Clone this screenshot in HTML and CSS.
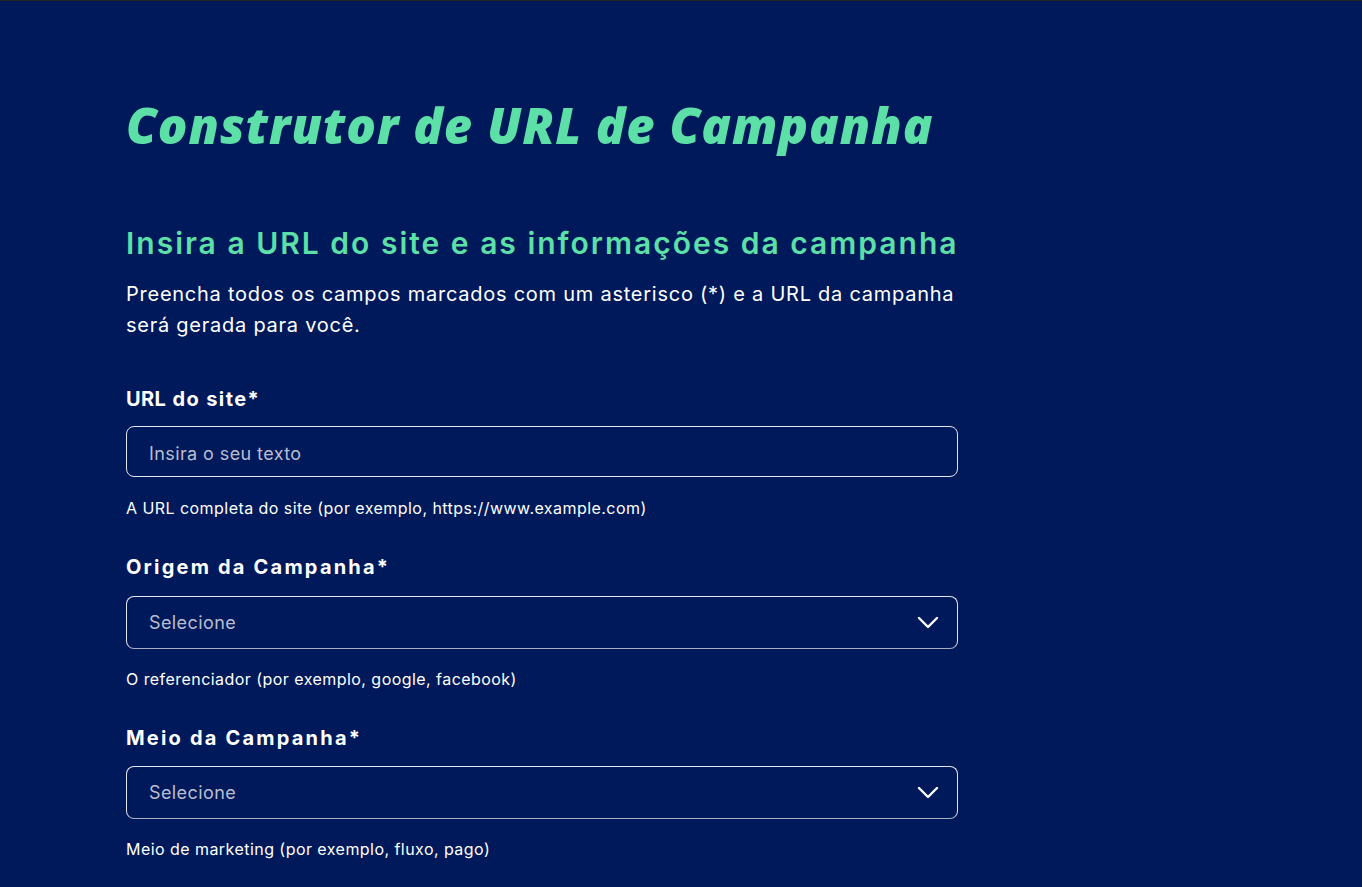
FILE: index.html
```html
<!DOCTYPE html>
<html lang="pt-BR">
<head>
<meta charset="utf-8">
<title>Construtor de URL de Campanha</title>
<link rel="stylesheet" href="styles.css">
</head>
<body>
<main class="page">
  <h1 class="title">Construtor de URL de Campanha</h1>
  <section class="form">
    <h2 class="subtitle">Insira a URL do site e as informações da campanha</h2>
    <p class="intro">Preencha todos os campos marcados com um asterisco (*) e a URL da campanha será gerada para você.</p>

    <div class="field">
      <label class="label label-short" for="url"><span class="caps">URL</span> do site*</label>
      <input class="input" id="url" type="text" placeholder="Insira o seu texto">
      <p class="help">A URL completa do site (por exemplo, https://www.example.com)</p>
    </div>

    <div class="field">
      <label class="label">Origem da Campanha*</label>
      <div class="select">
        <span class="select-text">Selecione</span>
        <svg class="chevron" width="22" height="14" viewBox="0 0 22 14"><path d="M2 2 L11 11 L20 2" fill="none" stroke="#fff" stroke-width="2.4" stroke-linecap="round" stroke-linejoin="round"/></svg>
      </div>
      <p class="help">O referenciador (por exemplo, google, facebook)</p>
    </div>

    <div class="field">
      <label class="label">Meio da Campanha*</label>
      <div class="select">
        <span class="select-text">Selecione</span>
        <svg class="chevron" width="22" height="14" viewBox="0 0 22 14"><path d="M2 2 L11 11 L20 2" fill="none" stroke="#fff" stroke-width="2.4" stroke-linecap="round" stroke-linejoin="round"/></svg>
      </div>
      <p class="help">Meio de marketing (por exemplo, fluxo, pago)</p>
    </div>
  </section>
</main>
</body>
</html>
```
FILE: styles.css
```css
html, body {
  margin: 0;
  padding: 0;
}
body {
  background: #00195a;
  border-top: 1px solid #222;
  font-family: "Inter", "Open Sans", sans-serif;
  color: #fff;
  min-height: 886px;
}
.page {
  width: 832px;
  padding: 94px 0 0 126px;
}
.title {
  margin: 0;
  font-family: "Open Sans", sans-serif;
  font-style: italic;
  font-weight: 800;
  font-size: 49px;
  line-height: 60px;
  letter-spacing: 1px;
  color: #5ddfa8;
  white-space: nowrap;
}
.form {
  margin-top: 68px;
}
.subtitle {
  margin: 0;
  font-weight: 600;
  font-size: 30px;
  line-height: 40px;
  letter-spacing: 2px;
  color: #5ddfa8;
  white-space: nowrap;
}
.intro {
  width: 840px;
  margin: 16px 0 0;
  font-size: 20px;
  line-height: 31px;
  letter-spacing: 0.75px;
}
.field {
  margin-top: 44px;
}
.field + .field {
  margin-top: 34px;
}
.label {
  display: block;
  font-weight: 700;
  font-size: 20px;
  line-height: 28px;
  letter-spacing: 2.2px;
}
.label-short {
  letter-spacing: 1.4px;
}
.caps {
  letter-spacing: 0.4px;
}
.input, .select {
  box-sizing: border-box;
  display: flex;
  align-items: center;
  width: 832px;
  height: 51px;
  margin-top: 13px;
  padding: 3px 22px 0;
  border: 1px solid #e4e6ee;
  border-radius: 8px;
  background: transparent;
  color: #fff;
  font-family: inherit;
  font-size: 18px;
  letter-spacing: 0.4px;
}
.select {
  height: 53px;
  margin-top: 15px;
  justify-content: space-between;
  padding: 0 18px 0 22px;
  border-bottom-color: #a9adc2;
}
.field:last-child .select {
  margin-top: 14px;
}
.input::placeholder, .select-text {
  color: #b9bdd0;
}
.help {
  margin: 20px 0 0;
  font-size: 16px;
  line-height: 22px;
  letter-spacing: 0.45px;
}
.select + .help {
  margin-top: 19px;
}
```
